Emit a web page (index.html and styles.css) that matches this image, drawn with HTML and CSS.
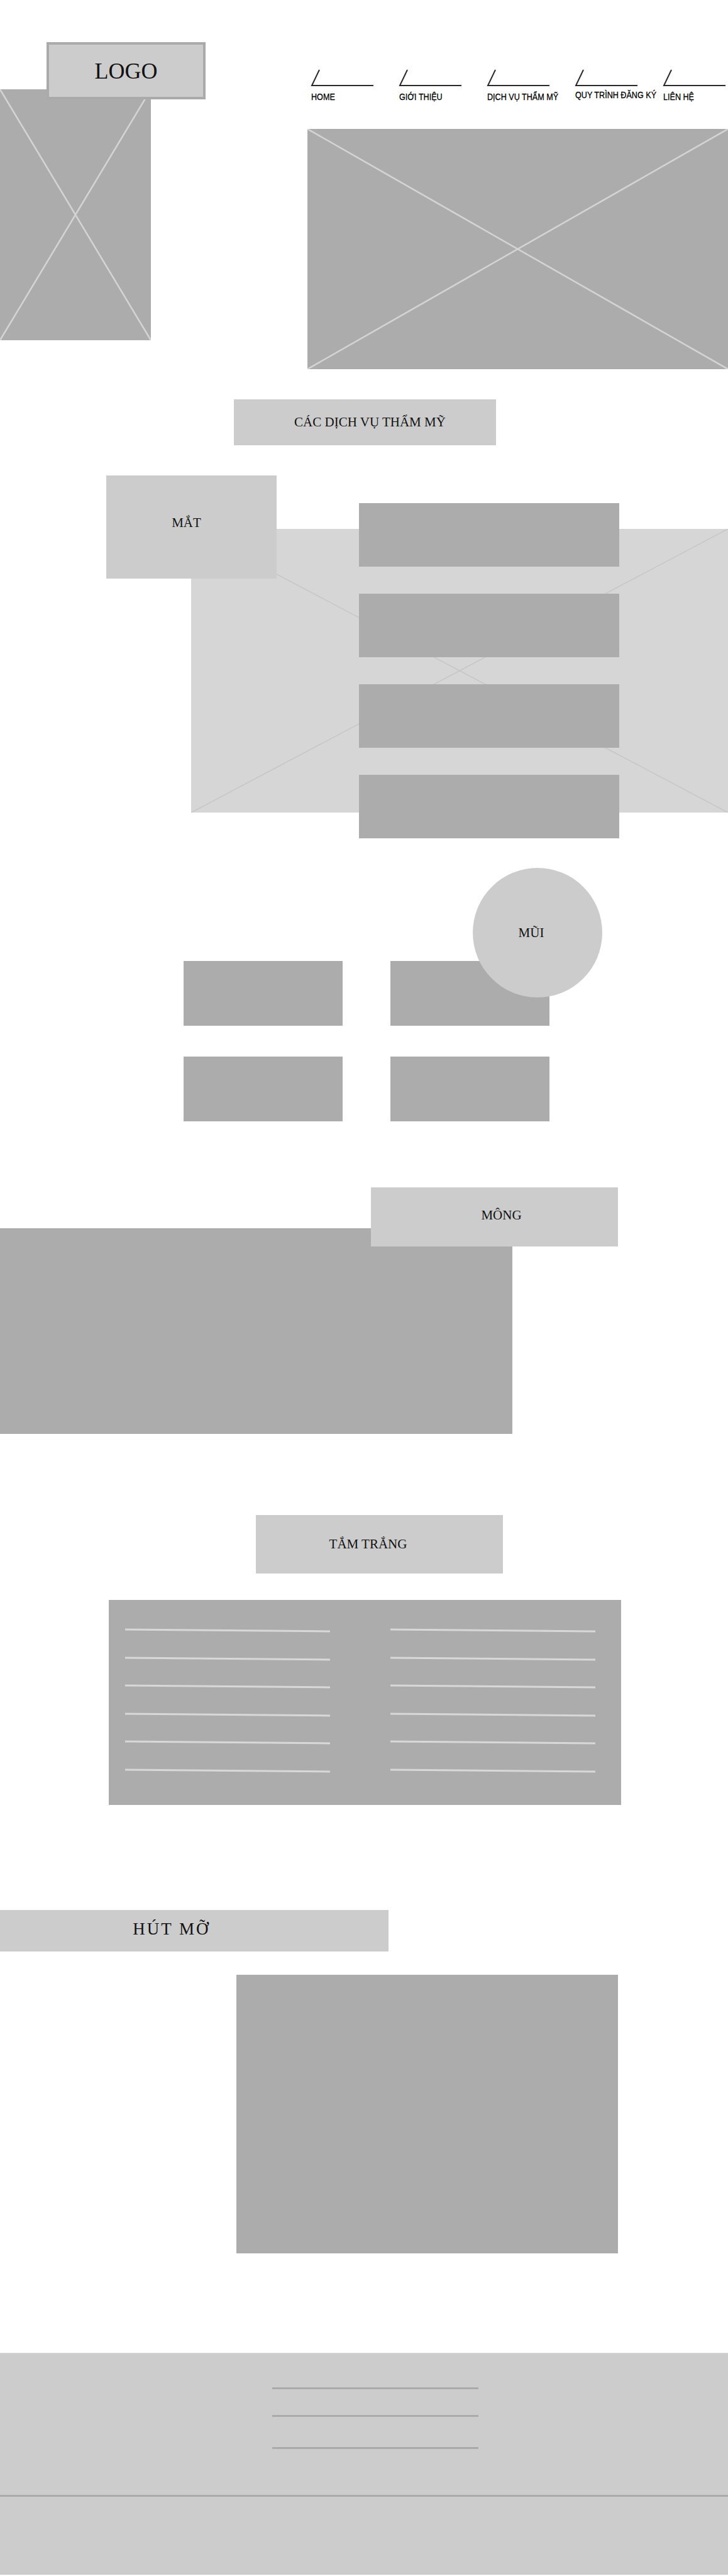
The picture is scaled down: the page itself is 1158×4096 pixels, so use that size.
FILE: index.html
```html
<!DOCTYPE html>
<html lang="vi">
<head>
    <meta charset="UTF-8">
    <title>Dịch vụ thẩm mỹ</title>
    <link rel="stylesheet" href="styles.css">
</head>
<body>
    <!-- header: logo, menu, banner -->
    <div class="header">
        <div class="logo">LOGO</div>
        <div class="header_left">
            <div class="ph side_img">
                <svg class="cross" viewBox="0 0 100 100" preserveAspectRatio="none"><line x1="0" y1="0" x2="100" y2="100"/><line x1="100" y1="0" x2="0" y2="100"/></svg>
            </div>
        </div>
        <div class="header_right">
            <ul class="menu">
                <li><svg class="menu_icon" viewBox="0 0 100 27"><polyline points="13,1 1,26 99,26"/></svg><span>HOME</span></li>
                <li><svg class="menu_icon" viewBox="0 0 100 27"><polyline points="13,1 1,26 99,26"/></svg><span>GIỚI THIỆU</span></li>
                <li><svg class="menu_icon" viewBox="0 0 100 27"><polyline points="13,1 1,26 99,26"/></svg><span>DỊCH VỤ THẨM MỸ</span></li>
                <li class="up"><svg class="menu_icon" viewBox="0 0 100 27"><polyline points="13,1 1,26 99,26"/></svg><span>QUY TRÌNH ĐĂNG KÝ</span></li>
                <li><svg class="menu_icon" viewBox="0 0 100 27"><polyline points="13,1 1,26 99,26"/></svg><span>LIÊN HỆ</span></li>
            </ul>
            <div class="ph hero">
                <svg class="cross" viewBox="0 0 100 100" preserveAspectRatio="none"><line x1="0" y1="0" x2="100" y2="100"/><line x1="100" y1="0" x2="0" y2="100"/></svg>
            </div>
        </div>
    </div>

    <!-- các dịch vụ -->
    <div class="label services_title">CÁC DỊCH VỤ THẨM MỸ</div>
    <div class="eye">
        <div class="label eye_label">MẮT</div>
        <div class="eye_img">
            <svg class="cross" viewBox="0 0 100 100" preserveAspectRatio="none"><line x1="0" y1="0" x2="100" y2="100"/><line x1="100" y1="0" x2="0" y2="100"/></svg>
        </div>
        <div class="eye_list">
            <div class="ph"></div>
            <div class="ph"></div>
            <div class="ph"></div>
            <div class="ph"></div>
        </div>
    </div>

    <!-- mũi -->
    <div class="nose">
        <div class="nose_circle">MŨI</div>
        <div class="ph"></div>
        <div class="ph"></div>
        <div class="ph"></div>
        <div class="ph"></div>
    </div>

    <!-- mông -->
    <div class="label butt_label">MÔNG</div>
    <div class="ph butt_img"></div>

    <!-- tắm trắng -->
    <div class="label white_label">TẮM TRẮNG</div>
    <div class="ph white_panel">
        <div class="text_line"></div><div class="text_line"></div>
        <div class="text_line"></div><div class="text_line"></div>
        <div class="text_line"></div><div class="text_line"></div>
        <div class="text_line"></div><div class="text_line"></div>
        <div class="text_line"></div><div class="text_line"></div>
        <div class="text_line"></div><div class="text_line"></div>
    </div>

    <!-- hút mỡ -->
    <div class="label lipo_label">HÚT MỠ</div>
    <div class="ph lipo_img"></div>

    <!-- footer -->
    <div class="footer">
        <div class="footer_top">
            <div class="footer_line"></div>
            <div class="footer_line"></div>
            <div class="footer_line"></div>
        </div>
        <div class="footer_bottom"></div>
    </div>
</body>
</html>
```

FILE: styles.css
```css
*{
    margin: 0;
    padding: 0;
    box-sizing: border-box;
}
body{
    background: #fff;
    font-family: "Liberation Serif", "Times New Roman", serif;
    color: #111;
}
/* khung ảnh xám */
.ph{
    background: #acacac;
    position: relative;
}
.cross{
    position: absolute;
    left: 0;
    top: 0;
    width: 100%;
    height: 100%;
}
.cross line{
    stroke: #d4d4d4;
    stroke-width: 2.5;
    vector-effect: non-scaling-stroke;
}
.label{
    background: #ccc;
    display: flex;
    align-items: center;
    justify-content: center;
    font-size: 21px;
}

/* header */
.header{
    display: flex;
    position: relative;
    height: 585px;
}
.logo{
    position: absolute;
    left: 74px;
    top: 67px;
    width: 253px;
    height: 91px;
    border: 4px solid #aaa;
    background: #ccc;
    z-index: 2;
    display: flex;
    align-items: center;
    justify-content: center;
    font-size: 36px;
}
.header_left{
    width: 240px;
    padding-top: 142px;
}
.side_img{
    height: 399px;
}
.header_right{
    flex: 1;
    margin-left: 249px;
    padding-top: 110px;
}
.menu{
    list-style: none;
    display: flex;
    padding-left: 6px;
}
.menu li{
    width: 140px;
    flex: none;
}
.menu li:last-child{
    width: auto;
    flex: 1;
}
.menu_icon{
    display: block;
    width: 100px;
    height: 27px;
    overflow: visible;
}
.menu_icon polyline{
    fill: none;
    stroke: #2a2a2a;
    stroke-width: 2;
}
.menu span{
    display: inline-block;
    margin-top: 9px;
    font-family: "Liberation Sans", Arial, sans-serif;
    font-size: 15px;
    line-height: 15px;
    color: #000;
    white-space: nowrap;
    transform: scaleX(0.84);
    transform-origin: left center;
    -webkit-text-stroke: 0.3px #000;
}
.menu li.up span{
    margin-top: 6px;
}
.hero{
    margin-top: 42px;
    height: 382px;
}

/* dịch vụ */
.services_title{
    margin: 50px 0 0 372px;
    width: 417px;
    height: 73px;
    padding-left: 16px;
}
.eye{
    position: relative;
    margin-top: 48px;
}
.eye_label{
    position: absolute;
    left: 169px;
    top: 0;
    width: 271px;
    height: 164px;
    padding: 0 16px 14px 0;
    z-index: 2;
}
.eye_img{
    position: absolute;
    left: 304px;
    top: 85px;
    width: 854px;
    height: 451px;
    background: #d6d6d6;
}
.eye_img .cross line{
    stroke: #c6c6c6;
    stroke-width: 1.5;
}
.eye_list{
    position: relative;
    z-index: 1;
    margin-left: 571px;
    width: 414px;
    padding-top: 44px;
    display: flex;
    flex-direction: column;
    gap: 43px;
}
.eye_list .ph{
    height: 101px;
}

/* mũi */
.nose{
    position: relative;
    margin: 195px 0 0 292px;
    width: 582px;
    display: grid;
    grid-template-columns: 253px 253px;
    grid-auto-rows: 103px;
    column-gap: 76px;
    row-gap: 49px;
}
.nose_circle{
    position: absolute;
    left: 460px;
    top: -148px;
    width: 206px;
    height: 206px;
    border-radius: 50%;
    background: #ccc;
    z-index: 1;
    display: flex;
    align-items: center;
    justify-content: center;
    padding-right: 20px;
    font-size: 21px;
}

/* mông */
.butt_label{
    position: relative;
    z-index: 1;
    margin: 105px 0 0 590px;
    width: 393px;
    height: 94px;
    padding: 0 0 6px 22px;
}
.butt_img{
    margin-top: -29px;
    width: 815px;
    height: 327px;
}

/* tắm trắng */
.white_label{
    margin: 129px 0 0 407px;
    width: 393px;
    height: 93px;
    padding-right: 36px;
}
.white_panel{
    margin: 42px 0 0 173px;
    width: 815px;
    height: 326px;
    padding: 47px 0 0 26px;
    display: grid;
    grid-template-columns: 326px 326px;
    grid-auto-rows: 3px;
    column-gap: 96px;
    row-gap: 41.6px;
}
.text_line{
    background: #d8d8d8;
    transform: rotate(0.5deg);
}

/* hút mỡ */
.lipo_label{
    margin-top: 167px;
    width: 618px;
    height: 66px;
    padding: 0 72px 6px 0;
    font-size: 27px;
    letter-spacing: 3px;
}
.lipo_img{
    margin: 37px 0 0 376px;
    width: 607px;
    height: 443px;
}

/* footer */
.footer{
    margin-top: 158px;
    background: #ccc;
    border-top: 1px solid #ddd;
}
.footer_top{
    height: 225px;
    padding-top: 54px;
}
.footer_line{
    margin-left: 433px;
    width: 328px;
    height: 3px;
    background: #aaa;
}
.footer_line + .footer_line{
    margin-top: 41px;
}
.footer_line:last-child{
    margin-top: 48px;
}
.footer_bottom{
    height: 127px;
    border-top: 3px solid #aaa;
}
```
